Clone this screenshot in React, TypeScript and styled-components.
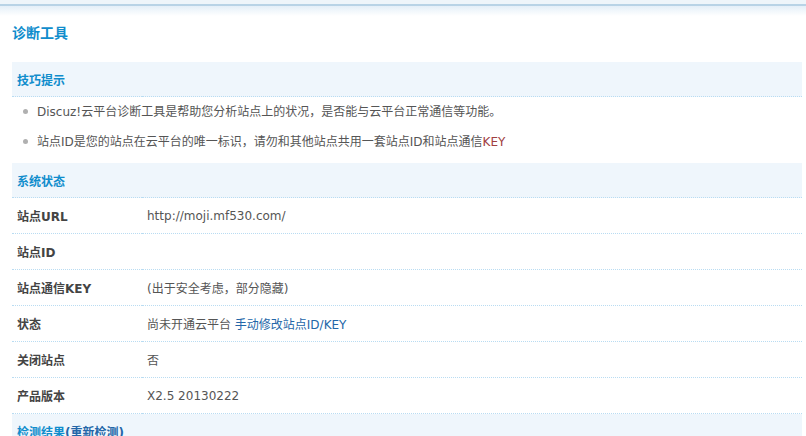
import React from "react";
import styled, { createGlobalStyle } from "styled-components";

const Global = createGlobalStyle`
  html, body { margin: 0; padding: 0; background: #fff; }
  body {
    font: 12px "DejaVu Sans", "Noto Sans CJK SC", sans-serif;
    color: #666;
  }
`;

const TopBar = styled.div`
  height: 16px;
  background: linear-gradient(#eef5fa 0, #eef5fa 4px, #b8d3e6 4px, #b8d3e6 6px, #e4eff8 6px, #ffffff 16px);
`;

const Page = styled.div`
  padding: 0 4px 0 12px;
`;

const Title = styled.h3`
  margin: 0;
  height: 46px;
  line-height: 34px;
  font-size: 14px;
  font-weight: bold;
  color: #108dcc;
`;

const Table = styled.table`
  width: 100%;
  border-collapse: collapse;
`;

const HeadCell = styled.th`
  height: 34px;
  padding: 0 5px;
  text-align: left;
  background: #eff6fc;
  color: #108dcc;
  font-weight: bold;
  border-bottom: 1px dotted #b9dcf2;
`;

const HeadLink = styled.a`
  color: #2366a8;
  text-decoration: none;
`;

const TipCell = styled.td`
  padding: 0 0 6px 0;
`;

const TipList = styled.ul`
  margin: 0;
  padding: 0 0 0 25px;
  list-style: none;
`;

const TipItem = styled.li`
  position: relative;
  line-height: 30px;
  color: #555;
  &::before {
    content: "";
    position: absolute;
    left: -14px;
    top: 12px;
    width: 5px;
    height: 5px;
    border-radius: 50%;
    background: #b0b0b0;
  }
`;

const Red = styled.span`
  color: #a0403f;
`;

const Row = styled.tr`
  & > td {
    height: 35px;
    border-bottom: 1px dotted #b9dcf2;
  }
  &:last-child > td { border-bottom: none; }
`;

const Label = styled.td`
  width: 120px;
  padding: 0 5px;
  font-weight: bold;
  color: #444;
`;

const Value = styled.td`
  padding: 0 5px;
  color: #555;
`;

const Link = styled.a`
  color: #2366a8;
  text-decoration: none;
`;

const rows: { label: string; value: React.ReactNode }[] = [
  { label: "站点URL", value: "http://moji.mf530.com/" },
  { label: "站点ID", value: "" },
  { label: "站点通信KEY", value: "(出于安全考虑，部分隐藏)" },
  {
    label: "状态",
    value: (
      <>
        尚未开通云平台 <Link href="#">手动修改站点ID/KEY</Link>
      </>
    ),
  },
  { label: "关闭站点", value: "否" },
  { label: "产品版本", value: "X2.5 20130222" },
];

export default function App() {
  return (
    <>
      <Global />
      <TopBar />
      <Page>
        <Title>诊断工具</Title>
        <Table>
          <tbody>
            <tr>
              <HeadCell colSpan={2}>技巧提示</HeadCell>
            </tr>
            <tr>
              <TipCell colSpan={2}>
                <TipList>
                  <TipItem>Discuz!云平台诊断工具是帮助您分析站点上的状况，是否能与云平台正常通信等功能。</TipItem>
                  <TipItem>
                    站点ID是您的站点在云平台的唯一标识，请勿和其他站点共用一套站点ID和站点通信<Red>KEY</Red>
                  </TipItem>
                </TipList>
              </TipCell>
            </tr>
            <tr>
              <HeadCell colSpan={2}>系统状态</HeadCell>
            </tr>
            {rows.map((r) => (
              <Row key={r.label}>
                <Label>{r.label}</Label>
                <Value>{r.value}</Value>
              </Row>
            ))}
            <tr>
              <HeadCell colSpan={2}>
                检测结果<HeadLink href="#">(重新检测)</HeadLink>
              </HeadCell>
            </tr>
          </tbody>
        </Table>
      </Page>
    </>
  );
}
